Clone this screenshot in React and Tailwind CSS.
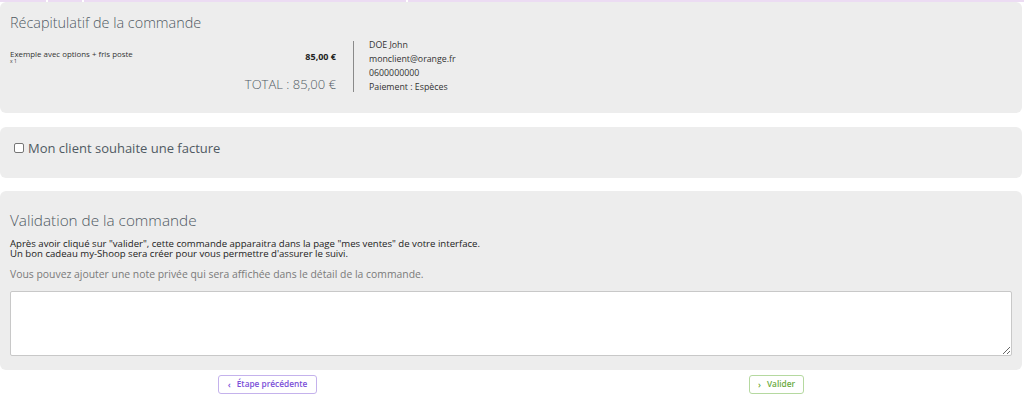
import React from "react";

export default function App() {
  return (
    <div className="w-[1024px] h-[398px] bg-white overflow-hidden" style={{ fontFamily: '"Open Sans", "Liberation Sans", sans-serif' }}>
      <div className="flex h-[2px] gap-[2px]">
        <div className="w-[46px] bg-[#ecdcf3]" />
        <div className="w-[34px] bg-[#ecdcf3]" />
        <div className="w-[322px] bg-[#ecdcf3]" />
        <div className="flex-1 bg-[#ecdcf3]" />
      </div>

      <div className="w-[1022px] h-[111px] bg-[#ededed] rounded-md pl-[10px] pt-[11px]">
        <div className="text-[14.4px] leading-[20px] font-light text-[#505a63]">Récapitulatif de la commande</div>
        <div className="flex mt-[5px]">
          <div className="w-[326px] flex flex-col pt-[12px]">
            <div className="flex justify-between items-center h-[14px]">
              <div className="flex flex-col">
                <span className="text-[7.9px] leading-[8px] font-medium text-[#333]">Exemple avec options + fris poste</span>
                <span className="text-[5px] leading-[6px] text-[#333]">x 1</span>
              </div>
              <span className="text-[9px] leading-[10px] font-bold text-[#222]">85,00 €</span>
            </div>
            <div className="mt-[11px] text-right text-[13px] leading-[18px] font-light text-[#505a63]">TOTAL : 85,00 €</div>
          </div>
          <div className="ml-[17px] mt-[3px] h-[51px] border-l border-[#8a8a8a]" />
          <div className="pl-[15px] flex flex-col text-[8.8px] leading-[14px] text-[#333]">
            <span>DOE John</span>
            <span>monclient@orange.fr</span>
            <span>0600000000</span>
            <span>Paiement : Espèces</span>
          </div>
        </div>
      </div>

      <div className="mt-[14px] w-[1022px] h-[51px] bg-[#ededed] rounded-md pl-[14px] pt-[12px]">
        <label className="flex items-center h-[18px] gap-[4px]">
          <span className="w-[10px] h-[10px] border border-[#767676] rounded-[2px] bg-white" />
          <span className="text-[13px] leading-[18px] text-[#505a63]">Mon client souhaite une facture</span>
        </label>
      </div>

      <div className="mt-[13px] w-[1022px] h-[179px] bg-[#ededed] rounded-md pl-[10px] pt-[19px]">
        <div className="text-[15.3px] leading-[20px] font-light text-[#505a63]">Validation de la commande</div>
        <p className="mt-[9px] text-[9.6px] leading-[10px] text-[#222]">
          Après avoir cliqué sur "valider", cette commande apparaitra dans la page "mes ventes" de votre interface.
          <br />
          Un bon cadeau my-Shoop sera créer pour vous permettre d'assurer le suivi.
        </p>
        <div className="mt-[9px] text-[10.4px] leading-[12px] text-[#7a7a7a]">Vous pouvez ajouter une note privée qui sera affichée dans le détail de la commande.</div>
        <textarea className="mt-[11px] block w-[1002px] h-[65px] bg-white border border-[#c8c8c8] rounded-[2px] resize-y" />
      </div>

      <div className="grid grid-cols-2 mt-[5px]">
        <div className="flex justify-center pl-[23px]">
          <button className="w-[99px] h-[19px] border border-[#c4b2ec] rounded-[3px] bg-white flex items-center justify-center gap-[6px] text-[8.3px] font-semibold text-[#7a4fd8]">
            <span className="text-[9px] leading-none">‹</span>
            <span>Étape précédente</span>
          </button>
        </div>
        <div className="flex justify-center pl-[17px]">
          <button className="w-[55px] h-[19px] border border-[#b5d9a0] rounded-[3px] bg-white flex items-center justify-center gap-[6px] text-[8.3px] font-semibold text-[#6aab3c]">
            <span className="text-[9px] leading-none">›</span>
            <span>Valider</span>
          </button>
        </div>
      </div>
    </div>
  );
}
